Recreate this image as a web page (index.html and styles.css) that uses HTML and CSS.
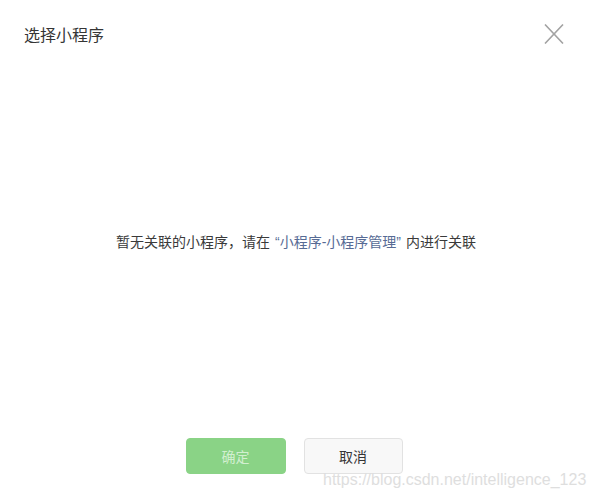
FILE: index.html
```html
<!DOCTYPE html>
<html lang="zh-CN">
<head>
<meta charset="utf-8">
<title>选择小程序</title>
<link rel="stylesheet" href="styles.css">
</head>
<body>
<div class="dialog">
  <div class="header">
    <h1 class="title">选择小程序</h1>
    <button class="close" aria-label="关闭">
      <svg width="20" height="20" viewBox="0 0 20 20"><path d="M1 0.5 L19 19.5 M19 0.5 L1 19.5" stroke="#a3a3a3" stroke-width="1.6" fill="none"/></svg>
    </button>
  </div>
  <div class="body">
    <p class="empty">暂无关联的小程序，请在 <a class="link">“小程序-小程序管理”</a> 内进行关联</p>
  </div>
  <div class="footer">
    <button class="btn btn-primary" disabled>确定</button>
    <button class="btn btn-default">取消</button>
  </div>
  <div class="watermark">https://blog.csdn.net/intelligence_123</div>
</div>
</body>
</html>
```
FILE: styles.css
```css
html, body {
  margin: 0;
  padding: 0;
  background: #fff;
}
body {
  font-family: "Liberation Sans", "Noto Sans CJK SC", sans-serif;
  color: #353535;
}
.dialog {
  position: relative;
  width: 594px;
  height: 497px;
  display: flex;
  flex-direction: column;
  overflow: hidden;
}
.header {
  height: 72px;
  display: flex;
  align-items: center;
  justify-content: space-between;
  padding: 0 30px 0 24px;
}
.title {
  margin: 0;
  font-size: 16px;
  font-weight: normal;
  color: #353535;
  line-height: 20px;
}
.close {
  border: 0;
  background: none;
  padding: 0;
  width: 20px;
  height: 20px;
  margin-top: -5px;
  cursor: pointer;
}
.close svg { display: block; }
.body {
  height: 340px;
  display: flex;
  align-items: center;
  justify-content: center;
}
.empty {
  margin: 0 0 0 -2px;
  font-size: 14px;
  line-height: 20px;
  color: #3a3a3a;
  word-spacing: 1px;
}
.link {
  color: #576b95;
  text-decoration: none;
}
.footer {
  display: flex;
  justify-content: center;
  gap: 18px;
  padding: 26px 6px 23px 0;
}
.btn {
  width: 100px;
  height: 36px;
  border-radius: 4px;
  font-family: "Liberation Sans", "Noto Sans CJK SC", sans-serif;
  font-size: 14px;
  padding: 0;
}
.btn-primary {
  background: #8ad386;
  color: #d2efd0;
  border: 1px solid #8ad386;
}
.btn-default {
  width: 99px;
  background: #f8f8f8;
  color: #353535;
  border: 1px solid #e2e2e2;
}
.watermark {
  position: absolute;
  left: 323px;
  top: 470px;
  font-size: 16px;
  line-height: 20px;
  color: #dedede;
  white-space: nowrap;
  pointer-events: none;
}
```
